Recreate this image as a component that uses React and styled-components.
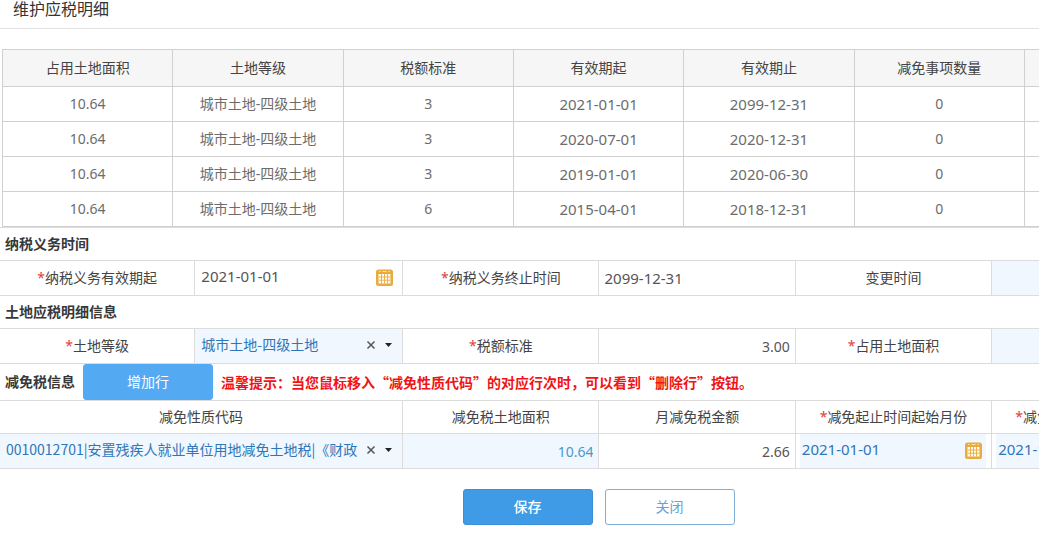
import React from "react";
import styled, { createGlobalStyle } from "styled-components";

const GlobalStyle = createGlobalStyle`
  *, *::before, *::after { box-sizing: border-box; }
  body {
    margin: 0;
    background: #fff;
    color: #444;
    font: 14px/20px "Noto Sans", "Noto Sans CJK SC", sans-serif;
  }
  input, select, button { font: inherit; margin: 0; }
`;

const line = "#dcdcdc";
const tint = "#f0f7fe";
const link = "#2f76b8";

const Page = styled.main`
  overflow-x: hidden;
`;

const PageTitle = styled.h1`
  margin: 0 0 20px;
  padding: 0 13px 10px;
  border-bottom: 1px solid #e2e2e2;
  font-size: 16px;
  line-height: 18px;
  font-weight: 400;
  color: #333;
`;

const SummaryWrap = styled.div`
  padding-left: 2px;
`;

const SummaryTable = styled.table`
  width: 100%;
  table-layout: fixed;
  border-collapse: separate;
  border-spacing: 0;
  border: solid #d0d0d0;
  border-width: 1px 0 0 1px;
  text-align: center;

  th, td {
    padding: 0;
    border: solid #d0d0d0;
    border-width: 0 1px 1px 0;
  }
  th {
    height: 37px;
    background: #f6f6f6;
    font-weight: 400;
  }
  td {
    height: 35px;
    color: #6c6c6c;
  }
  th:last-child, td:last-child { border-right: 0; }
`;

const DateText = styled.time`
  font-size: 15px;
`;

const Col = styled.col`
  width: ${(p) => p.$w};
`;

const Form = styled.form`
  border-top: 1px solid ${line};
`;

const SectionBar = styled.div`
  display: flex;
  align-items: center;
  gap: 8px;
  min-height: ${(p) => p.$height || 33}px;
  padding-left: 5px;
  border-bottom: 1px solid ${line};
  white-space: nowrap;
`;

const SectionTitle = styled.h2`
  margin: 0;
  font-size: 14px;
  line-height: 20px;
  font-weight: 700;
  color: #383838;
`;

const Hint = styled.strong`
  font-family: "Noto Sans CJK SC", sans-serif;
  color: #f01414;
`;

const FieldRow = styled.div`
  display: grid;
  grid-template-columns: 18.8% 20% 18.9% 18.9% 18.9% 1fr;
  height: 35px;
  border-bottom: 1px solid ${line};
`;

const FieldLabel = styled.label`
  display: flex;
  align-items: center;
  justify-content: center;
  border-right: 1px solid ${line};
  white-space: nowrap;
`;

const Required = styled.span`
  color: #e23c3c;
`;

const FieldCell = styled.div`
  min-width: 0;
  border-right: 1px solid ${line};
  background: ${(p) => (p.$tinted ? tint : "transparent")};

  &:last-child { border-right: 0; }
`;

const ValueInput = styled.input`
  display: block;
  width: 100%;
  height: 34px;
  padding: 0 5px;
  border: 0;
  outline: 0;
  background: transparent;
  color: ${(p) => (p.$blue ? "#4a98cb" : "#555")};
  font-size: ${(p) => (p.$amount ? 14 : 15)}px;
  text-align: ${(p) => (p.$amount ? "right" : "left")};
`;

const DateBox = styled.div`
  display: flex;
  align-items: center;
  height: 34px;
  min-width: 180px;
  margin: 0 5px 0 4px;
  padding: 0 4px 2px 2px;
  background: ${(p) => (p.$tinted ? tint : "transparent")};
`;

const DateInput = styled.input`
  flex: 1;
  min-width: 0;
  height: 30px;
  align-self: flex-start;
  padding: 0;
  border: 0;
  outline: 0;
  background: transparent;
  color: ${(p) => (p.$tinted ? link : "#555")};
  font-size: 15px;
`;

const IconButton = styled.button`
  display: flex;
  flex: none;
  padding: 0;
  border: 0;
  background: transparent;
  cursor: pointer;
`;

const ComboBox = styled.div`
  display: flex;
  align-items: center;
  height: 34px;
  padding: 0 9px 2px 6px;
`;

const ComboSelect = styled.select`
  flex: 1;
  min-width: 0;
  height: 30px;
  align-self: flex-start;
  padding: 0;
  border: 0;
  outline: 0;
  appearance: none;
  background: transparent;
  color: ${link};
  font-family: "Noto Sans CJK SC", sans-serif;
`;

const Caret = styled.svg`
  flex: none;
  margin-left: 7px;
`;

const DetailTable = styled.table`
  width: 100%;
  table-layout: fixed;
  border-collapse: separate;
  border-spacing: 0;

  th, td {
    padding: 0;
    border: solid ${line};
    border-width: 0 1px 1px 0;
    overflow: hidden;
    white-space: nowrap;
  }
  th {
    height: 33px;
    font-weight: 400;
  }
  td { height: 35px; }
  th:last-child, td:last-child { border-right: 0; }
  th:last-child {
    padding-left: 23px;
    text-align: left;
  }
`;

const DetailCell = styled.td`
  background: ${(p) => (p.$tinted ? tint : "transparent")};
`;

const Button = styled.button`
  width: 130px;
  height: 36px;
  padding: 0;
  border: 1px solid ${(p) => p.$border};
  border-radius: 3px;
  background: ${(p) => p.$fill};
  color: ${(p) => p.$ink};
  font-weight: ${(p) => (p.$strong ? 500 : 400)};
  cursor: pointer;
`;

const Actions = styled.div`
  display: flex;
  justify-content: center;
  gap: 12px;
  padding: 20px 0 19px 158px;
`;

function CalendarIcon() {
  return (
    <svg width="17" height="17" viewBox="0 0 17 17" aria-hidden="true">
      <rect x="0" y="0.5" width="17" height="16.5" rx="2.5" fill="#e9ab3c" />
      <path d="M3 2.500h1.500M6.500 2.500h4M12.500 2.500h1.500" stroke="#f8e3b8" strokeWidth="1" />
      <rect x="2.500" y="5" width="12" height="9.500" fill="#fffaf0" />
      <path
        d="M2.500 8h12M2.500 11.200h12M5.500 5v9.500M8.500 5v9.500M11.500 5v9.500"
        stroke="#e9ab3c"
        strokeWidth="0.900"
      />
    </svg>
  );
}

function DateField({ id, label, value, tinted }) {
  return (
    <DateBox $tinted={tinted}>
      <DateInput id={id} aria-label={label} defaultValue={value} size={8} $tinted={tinted} />
      <IconButton type="button" aria-label="选择日期">
        <CalendarIcon />
      </IconButton>
    </DateBox>
  );
}

function ComboField({ id, label, value }) {
  return (
    <ComboBox>
      <ComboSelect id={id} aria-label={label} defaultValue={value}>
        <option value={value}>{value}</option>
      </ComboSelect>
      <IconButton type="button" aria-label="清除">
        <svg width="12" height="12" viewBox="0 0 12 12" aria-hidden="true">
          <path d="M2.500 2.500l7 7M9.500 2.500l-7 7" stroke="#555" strokeWidth="1.500" />
        </svg>
      </IconButton>
      <Caret width="9" height="6" viewBox="0 0 9 6" aria-hidden="true">
        <path d="M1 1h7L4.500 5z" fill="#222" />
      </Caret>
    </ComboBox>
  );
}

function Label({ htmlFor, required, children }) {
  return (
    <FieldLabel htmlFor={htmlFor}>
      {required && <Required>*</Required>}
      {children}
    </FieldLabel>
  );
}

const headings = ["占用土地面积", "土地等级", "税额标准", "有效期起", "有效期止", "减免事项数量"];
const rows = [
  { area: "10.64", grade: "城市土地-四级土地", rate: "3", from: "2021-01-01", to: "2099-12-31", count: "0" },
  { area: "10.64", grade: "城市土地-四级土地", rate: "3", from: "2020-07-01", to: "2020-12-31", count: "0" },
  { area: "10.64", grade: "城市土地-四级土地", rate: "3", from: "2019-01-01", to: "2020-06-30", count: "0" },
  { area: "10.64", grade: "城市土地-四级土地", rate: "6", from: "2015-04-01", to: "2018-12-31", count: "0" },
];

export default function App() {
  return (
    <Page>
      <GlobalStyle />
      <PageTitle>维护应税明细</PageTitle>

      <SummaryWrap>
        <SummaryTable>
          <colgroup>
            {headings.map((h) => (
              <Col key={h} $w="16.44%" />
            ))}
            <col />
          </colgroup>
          <thead>
            <tr>
              {headings.map((h) => (
                <th key={h} scope="col">{h}</th>
              ))}
              <th />
            </tr>
          </thead>
          <tbody>
            {rows.map((r) => (
              <tr key={r.from}>
                <td>{r.area}</td>
                <td>{r.grade}</td>
                <td>{r.rate}</td>
                <td><DateText>{r.from}</DateText></td>
                <td><DateText>{r.to}</DateText></td>
                <td>{r.count}</td>
                <td />
              </tr>
            ))}
          </tbody>
        </SummaryTable>
      </SummaryWrap>

      <Form onSubmit={(e) => e.preventDefault()}>
        <SectionBar>
          <SectionTitle>纳税义务时间</SectionTitle>
        </SectionBar>
        <FieldRow>
          <Label htmlFor="start" required>纳税义务有效期起</Label>
          <FieldCell><DateField id="start" value="2021-01-01" /></FieldCell>
          <Label htmlFor="end" required>纳税义务终止时间</Label>
          <FieldCell><ValueInput id="end" defaultValue="2099-12-31" /></FieldCell>
          <Label htmlFor="changed">变更时间</Label>
          <FieldCell $tinted><ValueInput id="changed" /></FieldCell>
        </FieldRow>

        <SectionBar>
          <SectionTitle>土地应税明细信息</SectionTitle>
        </SectionBar>
        <FieldRow>
          <Label htmlFor="grade" required>土地等级</Label>
          <FieldCell $tinted><ComboField id="grade" value="城市土地-四级土地" /></FieldCell>
          <Label htmlFor="rate" required>税额标准</Label>
          <FieldCell><ValueInput id="rate" defaultValue="3.00" $amount /></FieldCell>
          <Label htmlFor="area" required>占用土地面积</Label>
          <FieldCell $tinted><ValueInput id="area" /></FieldCell>
        </FieldRow>

        <SectionBar $height={37}>
          <SectionTitle>减免税信息</SectionTitle>
          <Button type="button" $fill="#54a9f3" $border="#54a9f3" $ink="#fff">增加行</Button>
          <Hint>温馨提示：当您鼠标移入“减免性质代码”的对应行次时，可以看到“删除行”按钮。</Hint>
        </SectionBar>
        <DetailTable>
          <colgroup>
            <Col $w="38.8%" />
            <Col $w="18.9%" />
            <Col $w="18.9%" />
            <Col $w="18.9%" />
            <col />
          </colgroup>
          <thead>
            <tr>
              <th scope="col">减免性质代码</th>
              <th scope="col">减免税土地面积</th>
              <th scope="col">月减免税金额</th>
              <th scope="col"><Required>*</Required>减免起止时间起始月份</th>
              <th scope="col"><Required>*</Required>减免起止时间终止月份</th>
            </tr>
          </thead>
          <tbody>
            <tr>
              <DetailCell $tinted>
                <ComboField label="减免性质代码" value="0010012701|安置残疾人就业单位用地减免土地税|《财政" />
              </DetailCell>
              <DetailCell $tinted>
                <ValueInput aria-label="减免税土地面积" defaultValue="10.64" $amount $blue />
              </DetailCell>
              <DetailCell>
                <ValueInput aria-label="月减免税金额" defaultValue="2.66" $amount />
              </DetailCell>
              <DetailCell><DateField label="起始月份" value="2021-01-01" tinted /></DetailCell>
              <DetailCell><DateField label="终止月份" value="2021-12-31" tinted /></DetailCell>
            </tr>
          </tbody>
        </DetailTable>

        <Actions>
          <Button type="submit" $fill="#3f9be6" $border="#3a8fd6" $ink="#fff" $strong>保存</Button>
          <Button type="button" $fill="#fff" $border="#7fadd3" $ink="#66a3d2">关闭</Button>
        </Actions>
      </Form>
    </Page>
  );
}
